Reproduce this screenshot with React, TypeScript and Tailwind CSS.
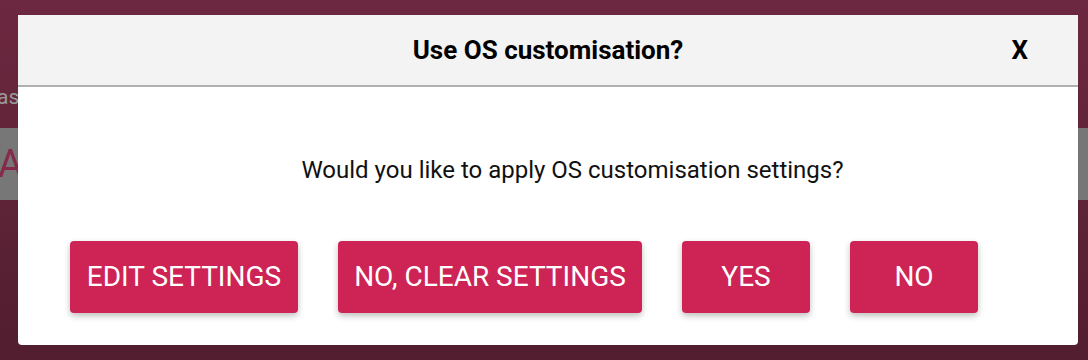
import React from 'react';

const buttons = [
  { label: 'EDIT SETTINGS', width: 'w-[228px]' },
  { label: 'NO, CLEAR SETTINGS', width: 'w-[304px]' },
  { label: 'YES', width: 'w-[128px]' },
  { label: 'NO', width: 'w-[128px]' },
];

const DialogButton: React.FC<{ label: string; width: string }> = ({ label, width }) => (
  <button
    className={`${width} h-[72px] rounded-[4px] bg-[#cd2355] text-white text-[28px] leading-none whitespace-nowrap shadow-[0_3px_6px_rgba(0,0,0,0.25)]`}
  >
    {label}
  </button>
);

export default function App() {
  return (
    <div
      className="relative h-[360px] w-[1088px] overflow-hidden bg-gradient-to-b from-[#6c2840] to-[#521e2f]"
      style={{ fontFamily: 'Roboto, "Noto Sans", sans-serif' }}
    >
      {/* Dimmed app content behind the dialog */}
      <div className="pt-[87px] -ml-[3px] text-[21px] leading-none text-[#9a9a9a]">as</div>
      <div className="mt-[20px] h-[72px] bg-[#777777] flex items-center text-[38px] leading-none text-[#86294a]">
        <span className="-ml-[2px]">A</span>
      </div>

      {/* Dialog */}
      <div className="absolute left-[18px] top-[15px] w-[1060px] h-[330px] bg-white rounded-b-[4px] flex flex-col">
        <div className="h-[72px] bg-[#f3f3f3] border-b-2 border-[#b0b0b0] relative flex items-center justify-center">
          <span className="text-[26px] font-bold text-black leading-none">Use OS customisation?</span>
          <span className="absolute right-[50px] top-[22px] text-[26px] font-bold text-black leading-none">X</span>
        </div>
        <div className="flex-1 flex flex-col">
          <p className="mt-[71px] pl-[49px] text-center text-[24px] text-[#111] leading-none">
            Would you like to apply OS customisation settings?
          </p>
          <div className="mt-[59px] pl-[52px] flex gap-[40px]">
            {buttons.map((b) => (
              <DialogButton key={b.label} label={b.label} width={b.width} />
            ))}
          </div>
        </div>
      </div>
    </div>
  );
}
